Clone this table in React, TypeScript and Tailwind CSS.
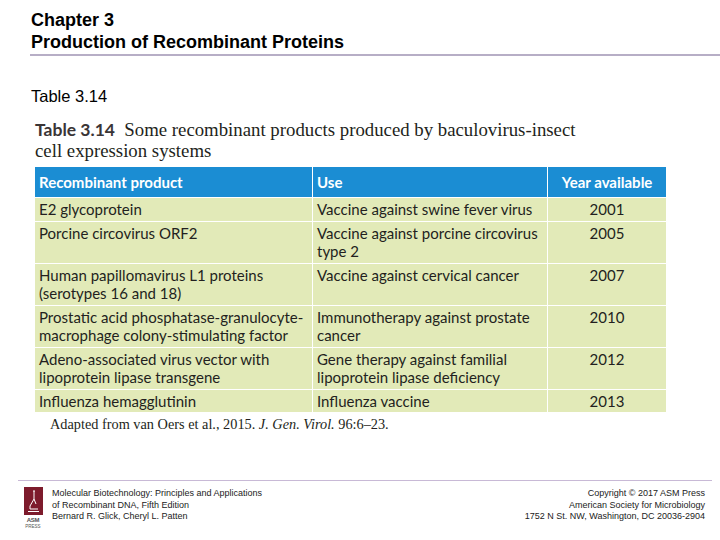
import React from 'react';

type Row = { product: string; use: string; year: string };

const rows: Row[] = [
  { product: 'E2 glycoprotein', use: 'Vaccine against swine fever virus', year: '2001' },
  { product: 'Porcine circovirus ORF2', use: 'Vaccine against porcine circovirus type 2', year: '2005' },
  { product: 'Human papillomavirus L1 proteins (serotypes 16 and 18)', use: 'Vaccine against cervical cancer', year: '2007' },
  { product: 'Prostatic acid phosphatase-granulocyte-macrophage colony-stimulating factor', use: 'Immunotherapy against prostate cancer', year: '2010' },
  { product: 'Adeno-associated virus vector with lipoprotein lipase transgene', use: 'Gene therapy against familial lipoprotein lipase deficiency', year: '2012' },
  { product: 'Influenza hemagglutinin', use: 'Influenza vaccine', year: '2013' },
];

const AsmLogo: React.FC = () => (
  <div className="flex flex-col items-center w-[20px]">
    <svg width="19" height="28" viewBox="0 0 19 28">
      <rect width="19" height="28" fill="#7d1b2c" />
      <path d="M9 4 L11 4 M10 4 L10 12 L6 19 L6 22 L14 22 M10 12 L12 17" stroke="#fff" strokeWidth="1" fill="none" />
      <path d="M4 24.5 L15 24.5" stroke="#fff" strokeWidth="1" />
    </svg>
    <span className="text-[6px] leading-[8px] font-bold text-[#555] tracking-tighter mt-[1px]">ASM</span>
    <span className="text-[4.5px] leading-[5px] text-[#555]">PRESS</span>
  </div>
);

export default function App() {
  return (
    <div className="w-[720px] h-[540px] bg-white flex flex-col font-['Liberation_Sans',Arial,sans-serif] text-black overflow-hidden">
      <div className="pl-[31px] pt-[9px] text-[18px] leading-[22px] font-bold">
        <div>Chapter 3</div>
        <div>Production of Recombinant Proteins</div>
      </div>
      <div className="ml-[30px] mt-[1px] h-[2px] bg-[#b7aec6]" />

      <div className="pl-[31px] mt-[31px] text-[16.5px] leading-[19px]">Table 3.14</div>

      <div className="ml-[35px] mt-[13px] w-[631px]">
        <div className="text-[18.8px] leading-[21px] text-[#231f20] font-['Liberation_Serif',serif]">
          <div>
            <span className="font-['Lato',sans-serif] font-bold text-[17.5px] text-[#3a3536]">Table 3.14</span>
            &nbsp; Some recombinant products produced by baculovirus-insect
          </div>
          <div>cell expression systems</div>
        </div>

        <div className="mt-[6px] grid grid-cols-[277px_234px_118px] gap-[1px] bg-white font-['Lato',sans-serif] text-[15px] leading-[18.5px] text-[#231f20]">
          <div className="h-[30px] bg-[#1b8dd3] text-white font-bold flex items-center px-[4px]">Recombinant product</div>
          <div className="h-[30px] bg-[#1b8dd3] text-white font-bold flex items-center px-[4px]">Use</div>
          <div className="h-[30px] bg-[#1b8dd3] text-white font-bold flex items-center justify-center">Year available</div>
          {rows.map((r) => (
            <React.Fragment key={r.year}>
              <div className="bg-[#e2eab8] px-[4px] py-[2px]">{r.product}</div>
              <div className="bg-[#e2eab8] px-[4px] py-[2px]">{r.use}</div>
              <div className="bg-[#e2eab8] py-[2px] text-center">{r.year}</div>
            </React.Fragment>
          ))}
        </div>

        <div className="mt-[3px] pl-[15px] text-[14.3px] leading-[18px] text-[#231f20] font-['Liberation_Serif',serif]">
          Adapted from van Oers et al., 2015. <i>J. Gen. Virol.</i> 96:6–23.
        </div>
      </div>

      <div className="mt-[47px]">
        <div className="ml-[18px] mr-[8px] h-px bg-[#c8b9d6]" />
        <div className="flex items-start px-[23px] pt-[6px]">
          <AsmLogo />
          <div className="ml-[9px] mt-[1px] text-[9px] leading-[11.5px] text-[#222]">
            <div>Molecular Biotechnology: Principles and Applications</div>
            <div>of Recombinant DNA, Fifth Edition</div>
            <div>Bernard R. Glick, Cheryl L. Patten</div>
          </div>
          <div className="ml-auto mr-[-8px] mt-[1px] text-[9px] leading-[11.5px] text-right text-[#222]">
            <div>Copyright © 2017 ASM Press</div>
            <div>American Society for Microbiology</div>
            <div>1752 N St. NW, Washington, DC 20036-2904</div>
          </div>
        </div>
      </div>
    </div>
  );
}
